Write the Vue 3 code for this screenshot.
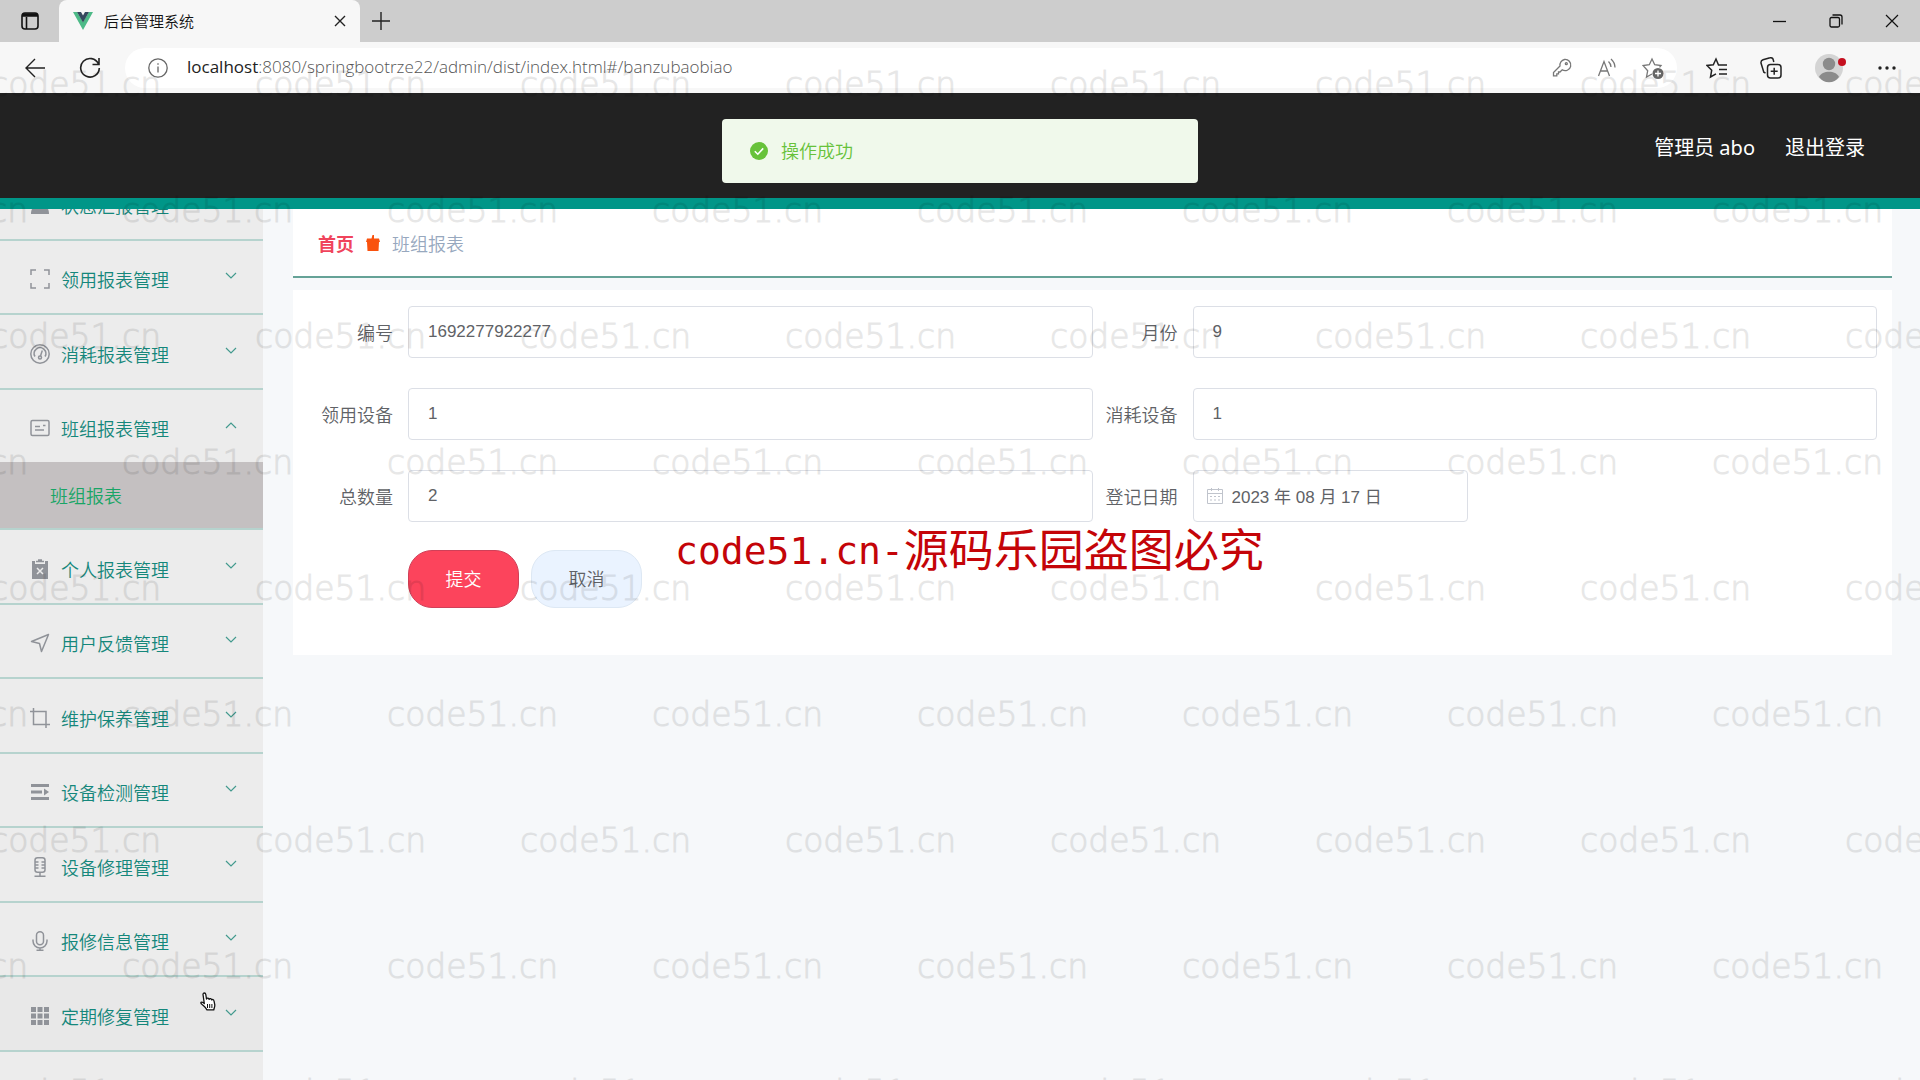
<script setup>
import { ref } from 'vue'

const menu = [
  { label: '状态汇报管理', icon: 'user' },
  { label: '领用报表管理', icon: 'frame' },
  { label: '消耗报表管理', icon: 'gauge' },
  { label: '班组报表管理', icon: 'card', children: ['班组报表'] },
  { label: '个人报表管理', icon: 'clipboard' },
  { label: '用户反馈管理', icon: 'send' },
  { label: '维护保养管理', icon: 'crop' },
  { label: '设备检测管理', icon: 'list' },
  { label: '设备修理管理', icon: 'micbox' },
  { label: '报修信息管理', icon: 'mic' },
  { label: '定期修复管理', icon: 'grid', hover: true }
]

const form = ref({
  id: '1692277922277',
  month: '9',
  used: '1',
  spent: '1',
  total: '2',
  date: '2023 年 08 月 17 日'
})

const markRows = 9
const markCols = 8
</script>

<template>
  <div class="window">
    <div class="tabs">
      <button class="workspace" aria-label="标签页操作">
        <svg width="20" height="20" viewBox="0 0 20 20" fill="none" stroke="#111" stroke-width="1.6">
          <rect x="2" y="2" width="16" height="16" rx="3" />
          <path d="M2 5h16M3 4h14M3 3h14M6.500 6v12" />
        </svg>
      </button>
      <div class="tab">
        <svg width="20" height="18" viewBox="0 0 20 18">
          <path d="M0 0h4l6 10 6-10h4L10 18z" fill="#4dba87" />
          <path d="M4 0h4l2 3.500L12 0h4l-6 10.500z" fill="#35495e" />
        </svg>
        <span class="tab-title">后台管理系统</span>
        <button aria-label="关闭标签页">
          <svg width="12" height="12" viewBox="0 0 12 12" stroke="#222" stroke-width="1.400"><path d="M1 1l10 10M11 1L1 11" /></svg>
        </button>
      </div>
      <button class="new-tab" aria-label="新建标签页">
        <svg width="18" height="18" viewBox="0 0 18 18" stroke="#222" stroke-width="1.400"><path d="M9 0v18M0 9h18" /></svg>
      </button>
      <div class="controls">
        <button aria-label="最小化"><svg width="14" height="14" viewBox="0 0 14 14" stroke="#111" stroke-width="1.300"><path d="M0 7.500h13" /></svg></button>
        <button aria-label="还原"><svg width="14" height="14" viewBox="0 0 14 14" fill="none" stroke="#111" stroke-width="1.300"><rect x="1" y="3.500" width="9.500" height="9.500" rx="1.500" /><path d="M3.500 1h7.500a2 2 0 0 1 2 2v7.500" /></svg></button>
        <button aria-label="关闭"><svg width="14" height="14" viewBox="0 0 14 14" stroke="#111" stroke-width="1.200"><path d="M1 1l12 12M13 1L1 13" /></svg></button>
      </div>
    </div>

    <div class="toolbar">
      <button aria-label="返回"><svg width="20" height="20" viewBox="0 0 20 20" fill="none" stroke="#222" stroke-width="1.400"><path d="M20 10H1M10 1l-9 9 9 9" /></svg></button>
      <button aria-label="刷新"><svg width="22" height="22" viewBox="0 0 22 22" fill="none" stroke="#222" stroke-width="1.600"><path d="M19.500 7A9.300 9.300 0 1 0 20.300 11M20 1v6.500h-6.500" /></svg></button>
      <div class="address">
        <svg width="20" height="20" viewBox="0 0 20 20" fill="none" stroke="#666" stroke-width="1.300"><circle cx="10" cy="10" r="9.200" /><path d="M10 8.500v6M10 5.200v1.600" /></svg>
        <span class="url"><b>localhost</b>:8080/springbootrze22/admin/dist/index.html#/banzubaobiao</span>
        <div class="address-actions">
          <button aria-label="密码"><svg width="20" height="20" viewBox="0 0 20 20" fill="none" stroke="#777" stroke-width="1.300"><path d="M12.500 1.500a5.600 5.600 0 1 1-2.300 10.300L8 14H6.500v1.800H4.800v2H1.500v-3.300L8 8a5.600 5.600 0 0 1 4.500-6.500z" /><circle cx="14.300" cy="5.700" r="1" /></svg></button>
          <button aria-label="朗读"><svg width="20" height="20" viewBox="0 0 20 20" fill="none" stroke="#777" stroke-width="1.300"><path d="M1.500 18L7 3.500 12.500 18M3.400 13h7.200M11.500 3.500a8 8 0 0 1 2.500 5.500M14 1a12 12 0 0 1 4 8.500" /></svg></button>
          <button aria-label="收藏"><svg width="22" height="22" viewBox="0 0 22 22" fill="none" stroke="#777" stroke-width="1.300"><path d="M10 17l-5.500 3 1.200-6.300L1 8.500l6.300-.8L10 2l2.700 5.700 6.300.8-1.500 1.800" /><circle cx="16" cy="16.500" r="5.500" fill="#666" stroke="none" /><path d="M16 13.500v6M13 16.500h6" stroke="#fff" /></svg></button>
        </div>
      </div>
      <div class="tools">
        <button aria-label="收藏夹"><svg width="22" height="22" viewBox="0 0 22 22" fill="none" stroke="#222" stroke-width="1.500"><path d="M14 8h-1.500L10 2 7.300 7.800 1 8.500l4.700 4.700L4.500 20l5.500-3.200M14 8h7M13 12.500h8M13 17h8" /></svg></button>
        <button aria-label="集锦"><svg width="22" height="22" viewBox="0 0 22 22" fill="none" stroke="#222" stroke-width="1.500"><rect x="7.500" y="7.500" width="13.500" height="13.500" rx="3" /><path d="M14.200 10.800v7M10.700 14.200h7M5.500 16l-1.700-.7L1 6a3 3 0 0 1 2-3.200l7-2a2.500 2.500 0 0 1 3.200 1.800l.6 2.400" /></svg></button>
        <button aria-label="个人资料"><svg width="32" height="30" viewBox="0 0 32 30"><circle cx="15" cy="15" r="14" fill="#d4d4d4" /><circle cx="15" cy="11" r="6.200" fill="#8b8b8b" /><path d="M5 24c3-7 17-7 20 0-5 7-15 7-20 0z" fill="#8b8b8b" /><circle cx="28" cy="9" r="4" fill="#c50f1f" /></svg></button>
        <button aria-label="更多"><svg width="18" height="4" viewBox="0 0 18 4" fill="#222"><circle cx="2" cy="2" r="1.700" /><circle cx="9" cy="2" r="1.700" /><circle cx="16" cy="2" r="1.700" /></svg></button>
      </div>
    </div>

    <header class="header">
      <span>管理员 abo</span>
      <a href="#">退出登录</a>
      <div class="toast" role="status">
        <svg width="18" height="18" viewBox="0 0 18 18"><circle cx="9" cy="9" r="9" fill="#67c23a" /><path d="M4.800 9.200l3 3 5.400-5.800" fill="none" stroke="#fff" stroke-width="1.600" /></svg>
        <span>操作成功</span>
      </div>
    </header>

    <div class="body">
      <nav class="sidebar">
        <ul>
          <li v-for="item in menu" :key="item.label">
            <a href="#" class="item" :class="{ hover: item.hover }">
              <svg class="icon" width="20" height="20" viewBox="0 0 20 20" fill="none" stroke="#909399" stroke-width="1.500">
                <path v-if="item.icon === 'user'" d="M10 2a4.500 4.500 0 0 1 3 8c4 1.500 6 4 6 9H1c0-5 2-7.500 6-9a4.500 4.500 0 0 1 3-8z" fill="#909399" stroke="none" />
                <path v-else-if="item.icon === 'frame'" d="M1 6V1h5M14 1h5v5M19 14v5h-5M6 19H1v-5" />
                <g v-else-if="item.icon === 'gauge'"><circle cx="10" cy="10" r="9.200" /><path d="M5 12.500a5.800 5.800 0 1 1 10 0M12.300 6.500L10.500 12" /><circle cx="10" cy="13.500" r="1.500" /></g>
                <g v-else-if="item.icon === 'card'"><rect x="1" y="2.500" width="18" height="15" rx="1.500" /><path d="M5 8.500h5M5 12h9M13 7.500h2.500" /></g>
                <g v-else-if="item.icon === 'clipboard'"><path d="M2 2h3v3h10V2h3v18H2z" fill="#909399" stroke="none" /><path d="M6 2.500h8M8 1h4" /><path d="M7 9l6 6M13 9l-6 6" stroke="#ececec" /></g>
                <path v-else-if="item.icon === 'send'" d="M18.500 1.500L1.500 8.500l8 2 2 8z" stroke-linejoin="round" />
                <path v-else-if="item.icon === 'crop'" d="M0 3.500h16V20M3.500 0v16.500H20" />
                <g v-else-if="item.icon === 'list'"><path d="M1 3.500h18M1 10h11M1 16.500h18" stroke-width="2.800" /><path d="M14 6.500l5 3.500-5 3.500z" fill="#909399" stroke="none" /></g>
                <g v-else-if="item.icon === 'micbox'"><rect x="5" y="0.800" width="10" height="14.500" rx="2.500" /><path d="M5 5h3.500M5 8h3.500M5 11h3.500M15 5h-3.500M15 8h-3.500M15 11h-3.500M10 15v4M4.500 19.200h11" /></g>
                <g v-else-if="item.icon === 'mic'"><rect x="6.500" y="0.800" width="7" height="13" rx="3.500" /><path d="M3 8.500v1.500a7 7 0 0 0 14 0V8.500M10 17v2.500M6.500 19.300h7" /></g>
                <path v-else d="M1 1h5v5H1zM7.500 1h5v5h-5zM14 1h5v5h-5zM1 7.500h5v5H1zM7.500 7.500h5v5h-5zM14 7.500h5v5h-5zM1 14h5v5H1zM7.500 14h5v5h-5zM14 14h5v5h-5z" fill="#909399" stroke="none" />
              </svg>
              <span class="item-label">{{ item.label }}</span>
              <svg class="arrow" width="12" height="8" viewBox="0 0 12 8" fill="none" stroke="#439a8e" stroke-width="1.200">
                <path :d="item.children ? 'M1 7l5-5 5 5' : 'M1 1l5 5 5-5'" />
              </svg>
            </a>
            <a v-for="child in item.children" :key="child" href="#" class="sub">{{ child }}</a>
          </li>
        </ul>
      </nav>

      <main class="main">
        <div class="crumbs">
          <a href="#">首页</a>
          <svg width="14" height="16" viewBox="0 0 14 16" fill="#f9520e"><path d="M1 3.500h4.500L6.500 0h1.500v3.500H13L14 7h-1l-.5 9h-11L1 7H0z" /></svg>
          <span>班组报表</span>
        </div>

        <form class="panel" @submit.prevent>
          <div class="fields">
            <div class="field"><label for="id">编号</label><input id="id" v-model="form.id" type="text" /></div>
            <div class="field"><label for="month">月份</label><input id="month" v-model="form.month" type="text" /></div>
            <div class="field"><label for="used">领用设备</label><input id="used" v-model="form.used" type="text" /></div>
            <div class="field"><label for="spent">消耗设备</label><input id="spent" v-model="form.spent" type="text" /></div>
            <div class="field"><label for="total">总数量</label><input id="total" v-model="form.total" type="text" /></div>
            <div class="field">
              <label for="date">登记日期</label>
              <div class="date">
                <input id="date" v-model="form.date" type="text" />
                <svg width="16" height="16" viewBox="0 0 16 16" fill="none" stroke="#c0c4cc"><path d="M.5 1.500h15v14H.5zM.5 5.500h15M4.500 0v3M11.500 0v3M3 8.500h2M7 8.500h2M11 8.500h2M3 12h2M7 12h2M11 12h2" /></svg>
              </div>
            </div>
          </div>
          <div class="actions">
            <button type="submit" class="submit">提交</button>
            <button type="button" class="cancel">取消</button>
          </div>
        </form>
      </main>
    </div>

    <div class="marks" aria-hidden="true">
      <div v-for="r in markRows" :key="r" class="mark-row">
        <span v-for="c in markCols" :key="c">code51.cn</span>
      </div>
    </div>
    <div class="notice"><span>code51.cn-</span>源码乐园盗图必究</div>

    <svg class="cursor" width="18" height="20" viewBox="0 0 18 20" fill="#fff" stroke="#111" stroke-width="1.300" stroke-linejoin="round">
      <path d="M4 2.500c0-2 2.500-2 2.800 0L7.500 7c.5-1.300 2.300-1 2.600.3.600-1 2.200-.7 2.500.6.800-.8 2.200-.3 2.400 1l.8 4c.2 2-.8 3-1 5H8c-1-2.500-3.500-4-5.500-6C1 10.500 2.500 9.500 4 10.500l1.300 1z" />
      <path d="M8.500 12v4M10.700 12v4M12.900 12v4" stroke-width="1" />
    </svg>
  </div>
</template>

<style>
body {
  margin: 0;
  overflow: hidden;
}
</style>

<style scoped>
* {
  box-sizing: border-box;
}
.window {
  position: relative;
  display: flex;
  flex-direction: column;
  height: 100vh;
  overflow: hidden;
  background: #f6f8fa;
  font-family: "Noto Sans", "Noto Sans CJK SC", sans-serif;
  font-size: 18px;
  font-weight: 350;
}
button {
  display: flex;
  align-items: center;
  justify-content: center;
  padding: 0;
  border: 0;
  background: none;
  font: inherit;
}
a {
  text-decoration: none;
}
svg {
  flex: none;
}
.tabs {
  display: flex;
  flex: none;
  height: 42px;
  background: #cdcdcd;
}
.workspace {
  width: 59px;
}
.tab {
  display: flex;
  align-items: center;
  width: 301px;
  padding: 0 14px;
  border-radius: 8px 8px 0 0;
  background: #f7f7f7;
}
.tab-title {
  flex: 1;
  margin-left: 11px;
  padding-bottom: 2px;
  font-size: 15px;
  color: #111;
}
.new-tab {
  width: 42px;
}
.controls {
  display: flex;
  margin-left: auto;
}
.controls button {
  width: 56px;
}
.toolbar {
  display: flex;
  flex: none;
  align-items: center;
  height: 51px;
  padding: 0 24px;
  background: #f7f7f7;
}
.toolbar > button {
  width: 22px;
  margin-right: 33px;
}
.toolbar > button + button {
  margin-right: 24px;
}
.address {
  display: flex;
  flex: 1;
  align-items: center;
  height: 40px;
  padding: 0 13px 0 23px;
  border-radius: 20px;
  background: #fff;
}
.url {
  margin-left: 19px;
  padding-bottom: 2px;
  font-family: "Open Sans", sans-serif;
  font-size: 17px;
  font-weight: 300;
  color: #555;
}
.url b {
  font-weight: 400;
  color: #222;
}
.address-actions {
  display: flex;
  gap: 25px;
  margin-left: auto;
}
.tools {
  display: flex;
  align-items: center;
  gap: 32px;
  margin-left: 29px;
}
.header {
  position: relative;
  display: flex;
  flex: none;
  align-items: center;
  justify-content: flex-end;
  gap: 30px;
  height: 116px;
  padding: 2px 55px 0 0;
  border-bottom: 11px solid #009688;
  background: #222;
  font-size: 20px;
  font-weight: 400;
  color: #fff;
}
.header a {
  color: #fff;
}
.toast {
  position: absolute;
  top: 26px;
  left: 50%;
  display: flex;
  align-items: center;
  gap: 13px;
  width: 476px;
  height: 64px;
  padding: 0 28px;
  border-radius: 4px;
  background: #f0f9eb;
  font-size: 18px;
  font-weight: 350;
  color: #67c23a;
  transform: translateX(-50%);
}
.toast span {
  padding-bottom: 2px;
}
.body {
  display: flex;
  flex: 1;
  min-height: 0;
}
.sidebar {
  flex: none;
  width: 263px;
  overflow: hidden;
  background: #ececec;
}
.sidebar ul {
  margin: -43px 0 0;
  padding: 0;
  list-style: none;
}
.sidebar li {
  border-bottom: 2px solid #b6d3ce;
}
.item {
  display: flex;
  align-items: center;
  height: 72px;
  padding: 4px 26px 0 30px;
  color: #15877b;
}
li:nth-child(odd) .item {
  height: 73px;
}
.item.hover {
  background: #e8e8e8;
}
.item-label {
  flex: 1;
  margin-left: 11px;
}
.arrow {
  margin-bottom: 6px;
}
.sub {
  display: flex;
  align-items: center;
  height: 66px;
  padding-left: 50px;
  background: #c4c0c1;
  color: #18a566;
}
.main {
  flex: 1;
  min-width: 0;
  padding: 0 28px 0 30px;
}
.crumbs {
  display: flex;
  align-items: center;
  gap: 12px;
  height: 69px;
  padding: 0 25px;
  border-bottom: 2px solid #65a297;
  background: #fff;
  color: #97a8be;
}
.crumbs a {
  font-weight: 700;
  color: #f0445c;
}
.panel {
  margin-top: 12px;
  padding: 16px 15px 47px;
  background: #fff;
}
.fields {
  display: grid;
  grid-template-columns: 1fr 1fr;
  row-gap: 30px;
}
.field {
  display: flex;
  align-items: center;
}
.field label {
  flex: none;
  width: 100px;
  padding: 0 15px 0 0;
  text-align: right;
  color: #606266;
}
.field input {
  width: 100%;
  height: 52px;
  padding: 0 19px;
  border: 1px solid #dcdfe6;
  border-radius: 4px;
  background: #fff;
  font-family: "Liberation Sans", "Noto Sans CJK SC", sans-serif;
  font-size: 17px;
  color: #606266;
}
.date {
  position: relative;
  width: 275px;
}
.date input {
  padding: 0 0 2px 38px;
}
.date svg {
  position: absolute;
  top: 18px;
  left: 14px;
}
.actions {
  display: flex;
  gap: 12px;
  margin: 28px 0 0 100px;
}
.actions button {
  width: 111px;
  height: 58px;
  padding-bottom: 2px;
  border: 1px solid #dde8f4;
  border-radius: 24px;
  background: #eaf3ff;
  color: #606266;
}
.actions .submit {
  border-color: #d04058;
  background: #fc445c;
  color: #fff;
}
.marks {
  position: absolute;
  inset: 0;
  overflow: hidden;
  pointer-events: none;
  font-family: "DejaVu Sans Light", "DejaVu Sans", sans-serif;
  font-size: 33px;
  font-weight: 200;
  line-height: 126px;
  color: #000;
  -webkit-text-stroke: 1px #000;
  opacity: 0.09;
}
.mark-row {
  display: flex;
  height: 126px;
  margin-left: -10px;
}
.mark-row:nth-child(even) {
  margin-left: -143px;
}
.mark-row:first-child {
  margin-top: 22px;
}
.mark-row span {
  flex: none;
  width: 265px;
}
.notice {
  position: absolute;
  top: 518px;
  left: 675px;
  font-family: "Noto Sans CJK SC", sans-serif;
  font-size: 45px;
  font-weight: 400;
  line-height: 60px;
  white-space: nowrap;
  color: #c40408;
  pointer-events: none;
}
.notice span {
  font-family: "DejaVu Sans Mono", monospace;
  font-size: 38px;
  line-height: 1;
  vertical-align: 3px;
}
.cursor {
  position: absolute;
  top: 992px;
  left: 199px;
}
</style>
